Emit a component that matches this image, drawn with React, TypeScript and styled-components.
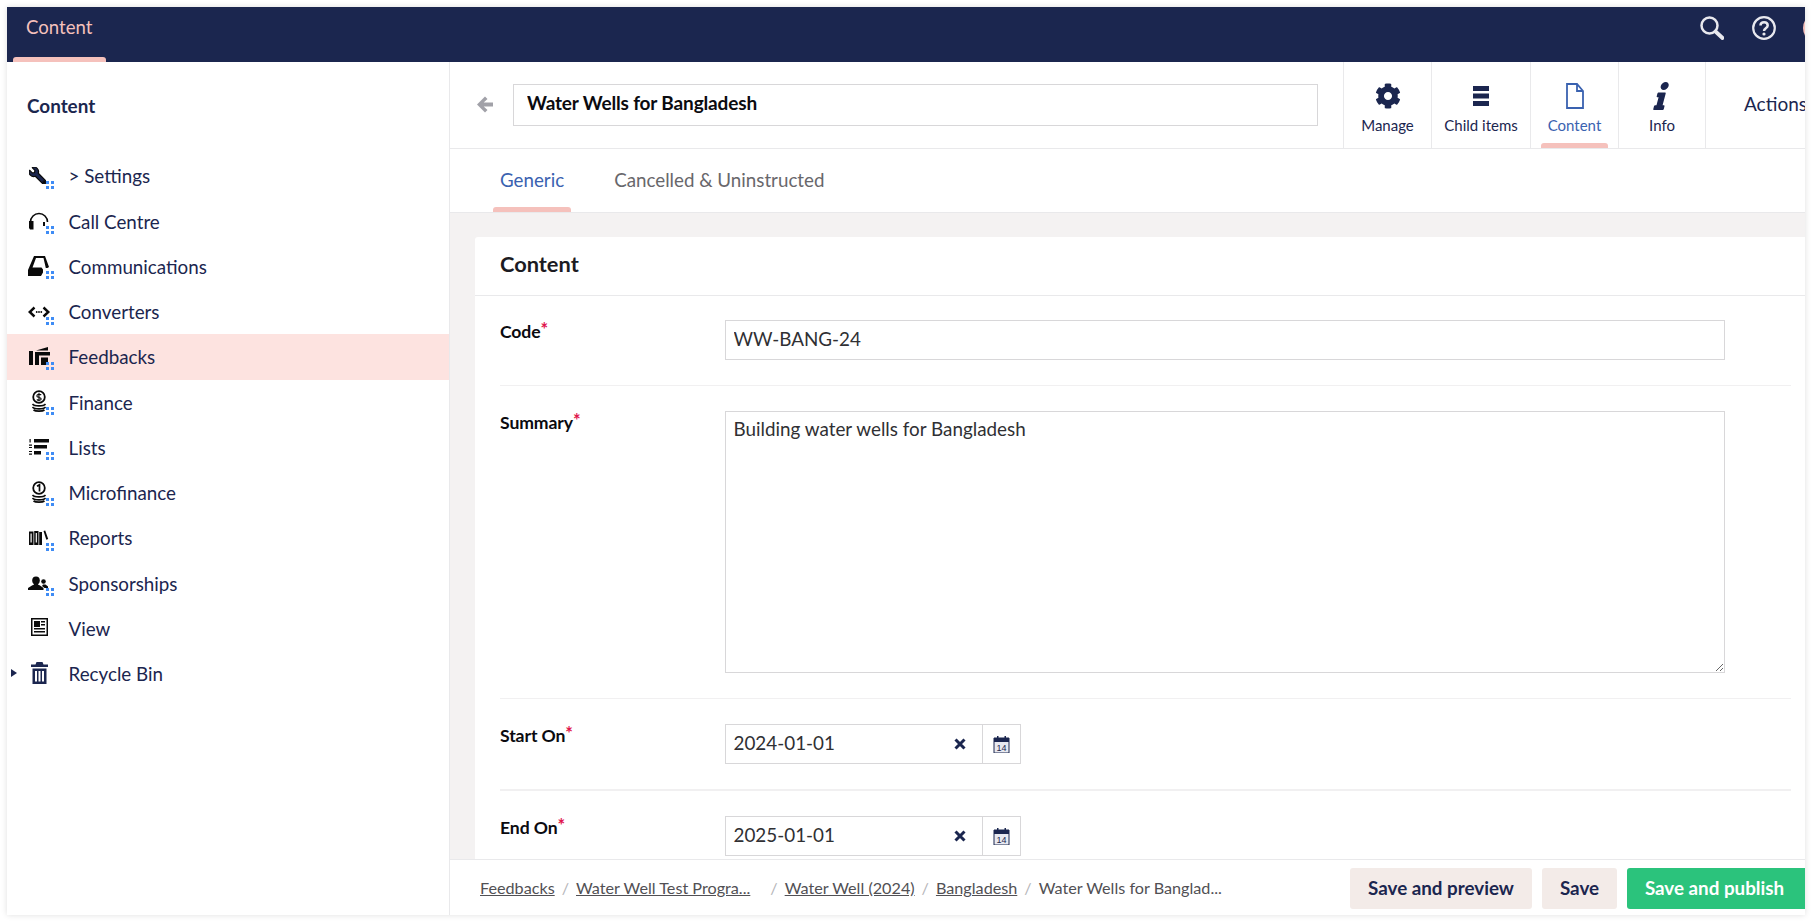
import React from "react";
import styled, { createGlobalStyle } from "styled-components";
import { FaCog, FaInfo, FaWrench } from "react-icons/fa";

const Global = createGlobalStyle`
  html, body { margin: 0; padding: 0; background: #fff; height: 100%; overflow: hidden; }
  body { font-family: Lato, "Noto Sans", sans-serif; color: #1b264f; }
  * { box-sizing: border-box; }
`;

const Frame = styled.div`
  width: 1798px; height: 908px; margin: 7px 0 0 7px;
  display: flex; flex-direction: column; overflow: hidden;
  background: #fff; box-shadow: 0 0 6px rgba(0,0,0,.13);
`;
const TopBar = styled.header`
  height: 55px; flex: none; background: #1b264f; display: flex; align-items: flex-start;
  justify-content: space-between; padding-left: 6px;
`;
const TopTab = styled.div`
  position: relative; width: 93px; height: 55px; padding: 8.5px 0 0 13px;
  color: #f5c1bc; font-size: 18.6px; line-height: 22px;
  &::after { content: ""; position: absolute; left: 0; right: 0; bottom: 0; height: 5px; background: #f5c1bc; border-radius: 3px 3px 0 0; }
`;
const TopTools = styled.div`
  display: flex; align-items: center; height: 42px; gap: 28px; margin-right: -28px; color: #e8e8ee;
`;
const Avatar = styled.div`
  width: 30px; height: 30px; border-radius: 50%; background: #f5c1bc; margin-left: -1px;
`;
const Body = styled.div`flex: 1; display: flex; min-height: 0;`;
const Sidebar = styled.nav`
  width: 443px; flex: none; border-right: 1px solid #e9e9eb; display: flex; flex-direction: column;
`;
const SideTitle = styled.div`
  height: 91.3px; padding: 32px 0 0 20px; font-size: 18.9px; line-height: 24px; font-weight: 700; color: #1b264f;
`;
const SideRow = styled.div<{ $active?: boolean }>`
  position: relative; height: 45.25px; flex: none; display: flex; align-items: center; padding-left: 21px;
  background: ${p => (p.$active ? "#fde3e0" : "transparent")};
  font-size: 18.8px; color: #1b264f;
`;
const Caret = styled.span`
  position: absolute; left: 4px; top: 18px; width: 0; height: 0;
  border-left: 6px solid #1b264f; border-top: 4.5px solid transparent; border-bottom: 4.5px solid transparent;
`;
const IconSlot = styled.span`
  position: relative; width: 40.5px; height: 26px; flex: none; display: block;
  svg { display: block; }
`;
const Dots = styled.span`
  position: absolute; left: 18px; top: 18px; width: 8px; height: 8px;
  background:
    linear-gradient(#3f8cf5,#3f8cf5) 0 0/3px 3px no-repeat,
    linear-gradient(#3f8cf5,#3f8cf5) 100% 0/3px 3px no-repeat,
    linear-gradient(#3f8cf5,#3f8cf5) 0 100%/3px 3px no-repeat,
    linear-gradient(#3f8cf5,#3f8cf5) 100% 100%/3px 3px no-repeat;
`;
const Main = styled.main`flex: 1; min-width: 0; display: flex; flex-direction: column;`;
const TitleBar = styled.div`
  height: 87px; flex: none; display: flex; border-bottom: 1px solid #e9e9eb;
`;
const TitleLeft = styled.div`
  flex: 1; display: flex; align-items: center; padding: 0 25px 0 27px; gap: 20px;
  svg { margin-top: -2px; }
`;
const TitleInput = styled.input`
  flex: 1; height: 42px; border: 1px solid #d8d7d9; padding: 0 13px 5px; font: 700 19px Lato, sans-serif; letter-spacing: -.15px; color: #0b0b10; outline: none; background: #fff;
`;
const ToolCell = styled.div<{ $w: number; $active?: boolean }>`
  position: relative; width: ${p => p.$w}px; flex: none; border-left: 1px solid #e9e9eb;
  display: flex; flex-direction: column; align-items: center; padding-top: 20px;
  font-size: 15px; line-height: 20px; color: ${p => (p.$active ? "#3a62b0" : "#1b264f")};
  svg { display: block; height: 28px; margin-bottom: 5px; }
  ${p => p.$active ? `&::after { content: ""; position: absolute; left: 10px; right: 10px; bottom: 0; height: 5px; background: #f5c1bc; border-radius: 3px 3px 0 0; }` : ""}
`;
const ActionsCell = styled.div`
  width: 100px; flex: none; border-left: 1px solid #e9e9eb; padding: 30px 0 0 38px; font-size: 19px; line-height: 24px; color: #1b264f; white-space: nowrap; overflow: hidden;
`;
const Tabs = styled.div`
  height: 64px; flex: none; display: flex; padding-left: 43px; gap: 36px; border-bottom: 1px solid #e9e9eb;
`;
const TabItem = styled.div<{ $active?: boolean }>`
  position: relative; padding: 18px 7px 0; font-size: 18.75px; line-height: 26px;
  color: ${p => (p.$active ? "#3a62b0" : "#68676b")};
  ${p => p.$active ? `&::after { content: ""; position: absolute; left: 0; right: 0; bottom: 0; height: 5px; background: #f5c1bc; border-radius: 3px 3px 0 0; }` : ""}
`;
const Scroll = styled.div`
  flex: 1; min-height: 0; overflow: hidden; background: #f4f2f2; padding: 24px 0 0 25px;
`;
const Card = styled.section`
  background: #fff; border-radius: 3px 0 0 0; padding-bottom: 30px;
`;
const CardHead = styled.div`
  height: 59px; border-bottom: 1px solid #e9e9eb; padding: 13px 0 0 25px; font-size: 21.8px; line-height: 28px; font-weight: 700; color: #1b1b22;
`;
const FieldRow = styled.div<{ $line?: number }>`
  margin: 0 14px 0 25px; padding-top: ${p => (p.$line ? 25 : 24)}px; display: flex; align-items: flex-start;
  ${p => (p.$line ? `border-top: ${p.$line}px solid #f1f0f1;` : "")}
`;
const Label = styled.div`
  width: 225px; flex: none; font-size: 17.6px; line-height: 22px; font-weight: 700; color: #0b0b10; letter-spacing: -.1px; margin-top: 1px;
  sup { color: #e0144c; font-size: 18px; font-weight: 700; line-height: 0; vertical-align: 2px; }
`;
const TextInput = styled.input`
  width: 1000px; height: 40px; border: 1px solid #d8d7d9; padding: 0 7.5px 3px; font: 400 18.85px Lato, sans-serif; color: #303033; outline: none; margin-bottom: 25px; display: block;
`;
const TextArea = styled.textarea`
  width: 1000px; height: 262px; border: 1px solid #d8d7d9; padding: 5px 7.5px; font: 400 18.85px/24px Lato, sans-serif; color: #303033; outline: none; margin-bottom: 25px; display: block; resize: vertical;
`;
const DateGroup = styled.div`display: flex; margin-bottom: 25px;`;
const DateBox = styled.div`
  width: 258px; height: 40px; border: 1px solid #d8d7d9; display: flex; align-items: center; padding: 0 16px 3px 7.5px;
  font-size: 18.85px; color: #303033; justify-content: space-between; background: #fff;
  svg { margin-top: 3px; }
`;
const CalButton = styled.div`
  width: 39px; height: 40px; margin-left: -1px; border: 1px solid #d8d7d9; display: flex; align-items: center; justify-content: center;
`;
const Footer = styled.footer`
  height: 56px; flex: none; border-top: 1px solid #e9e9eb; display: flex; align-items: center; justify-content: space-between; padding: 0 0 0 30px; background: #fff;
`;
const Crumbs = styled.div`display: flex; align-items: center; font-size: 16.2px; color: #515054; white-space: nowrap;`;
const CrumbLink = styled.a`color: #515054; text-decoration: underline;`;
const CrumbText = styled.span`color: #515054;`;
const Slash = styled.span<{ $wide?: boolean }>`color: #b5b5b9; margin: 0 7px 0 ${p => (p.$wide ? 20 : 7)}px;`;
const Buttons = styled.div`display: flex; gap: 10px; padding-top: 1px;`;
const Btn = styled.button<{ $primary?: boolean; $w: number }>`
  height: 41px; width: ${p => p.$w}px; border: none; padding: 0 0 2px; font: 700 18.8px Lato, sans-serif;
  ${p => p.$primary ? "background:#2bc37c;color:#fff;border-radius:3px 0 0 3px;padding-right:3px;" : "background:#f3ebe8;color:#1b264f;border-radius:3px;"}
`;

const K = "#0a0a0a";
const S = (p: { children: React.ReactNode; color?: string }) => (
  <svg width="24" height="24" viewBox="0 0 24 24" fill={p.color ?? K}>{p.children}</svg>
);
const stack = (
  <path d="M4.500 15c2 2.500 11 2.500 13 0M4.500 18c2 2.500 11 2.500 13 0M5.500 21c2 1.500 9 1.500 11 0" fill="none" stroke={K} strokeWidth="1.600" />
);
const icons: Record<string, React.ReactNode> = {
  wrench: <S><g transform="translate(18,4) scale(-1,1)"><FaWrench size={17} stroke={K} strokeWidth={36} /></g></S>,
  headset: <S><path d="M2.500 14a8.500 8.500 0 0 1 17 0" fill="none" stroke={K} strokeWidth="1.600" /><path d="M1 13h4.500v8.500H2L1 20z" /><rect x="15" y="14" width="2" height="4" /></S>,
  comm: <S><path fillRule="evenodd" d="M6 3h11l4 11-1.500 1h-1.700L15.500 5H8L4.500 14.500h9l1.500 2v3l-2 3.500H0v-6z" /></S>,
  conv: <S><path d="M6.500 8.500 1.700 13l4.800 4.500M15.500 8.500 20.300 13l-4.800 4.500" fill="none" stroke={K} strokeWidth="2.400" /><circle cx="8.700" cy="13" r=".9" /><circle cx="11" cy="13" r=".9" /><circle cx="13.300" cy="13" r=".9" /></S>,
  feed: <S><path d="M1 7h4v14H1zM7 8h15v3.500H11V21H7z" /><path d="M8 6.500 20 3v3.500zM13 13.500h7V21h-7z" /></S>,
  coinS: <S><circle cx="11" cy="8" r="5.800" fill="none" stroke={K} strokeWidth="1.800" /><path d="M13.200 6c-1-1-4.400-1-4.400.9s4.400 1.200 4.400 3-3.400 1.500-4.400.6M11 3.800v8.400" fill="none" stroke={K} strokeWidth="1.100" />{stack}</S>,
  lists: <S><path d="M1.500 5h1.200v3.500H1.500zM1 10.500h3v1.200H1zM1 13h3v1H1zM1 17h3v1H1zM1 19.500h3v1.200H1z" /><path d="M6 5h15v3.500H6zM6 11h13v3.500H6zM6 17h7v3.500H6z" /></S>,
  coin1: <S><circle cx="11" cy="8" r="5.800" fill="none" stroke={K} strokeWidth="1.800" /><path d="M9 6.200 11.500 4.800v6.600" fill="none" stroke={K} strokeWidth="1.700" />{stack}</S>,
  reports: <S><path fillRule="evenodd" d="M1 6.500h4.500V20H1zM2.500 8.500v9h1.200v-9zM6.200 6h4.300v14H6.200zM7.700 8v9.500h1.200V8zM11.200 7h2.800v13h-2.800zM15.500 6l1.700-.6 3 8.500-1.900.8z" /></S>,
  people: <S><ellipse cx="8" cy="10.500" rx="3.800" ry="4" /><path d="M0 20v-2l4-2.500 2-1V13h4v1.500l2 1 3.500 2.500v2z" /><circle cx="15.500" cy="11.500" r="2.300" /><path d="M15 14.500h2.500l2.500 2v1.500h-3.500l-2.500-2z" /></S>,
  view: <S><path fillRule="evenodd" d="M3 3h17v18H3zM4.500 4.500v15h14v-15z" /><path d="M6 6h6v6H6zM13 6h4v1.500h-4zM13 9h4v1.500h-4zM6 13h11v1.500H6zM6 16h11v1.500H6z" /></S>,
  bin: <S color="#1b264f"><path fillRule="evenodd" d="M8.500 1h6l1 2.500H20v2.500H3V3.500h4.500zM4.500 7.500h14V23h-14zM7 10v10.500h2V10zM10.500 10v10.500h2V10zM14 10v10.500h2V10z" /></S>,
};

const items = [
  { t: "> Settings", i: "wrench", d: true },
  { t: "Call Centre", i: "headset", d: true },
  { t: "Communications", i: "comm", d: true },
  { t: "Converters", i: "conv", d: true },
  { t: "Feedbacks", i: "feed", d: true, a: true },
  { t: "Finance", i: "coinS", d: true },
  { t: "Lists", i: "lists", d: true },
  { t: "Microfinance", i: "coin1", d: true },
  { t: "Reports", i: "reports", d: true },
  { t: "Sponsorships", i: "people", d: true },
  { t: "View", i: "view" },
  { t: "Recycle Bin", i: "bin", c: true },
];

const Cal = () => (
  <svg width="17" height="17" viewBox="0 0 17 17">
    <path d="M1 2h15v15H1z" fill="#e8e9f0" stroke="#1b264f" />
    <path d="M1 2h15v4H1zM4 0h1.500v3H4zM11.500 0H13v3h-1.500z" fill="#1b264f" />
    <text x="8.500" y="15" textAnchor="middle" fontSize="9" fontFamily="Liberation Sans, sans-serif" fill="#1b264f">14</text>
  </svg>
);
const Clear = () => (
  <svg width="12" height="12" viewBox="0 0 12 12" fill="none" stroke="#1b264f" strokeWidth="3">
    <path d="M1.500 1.500 10.500 10.500M10.500 1.500 1.500 10.500" />
  </svg>
);

export default function App() {
  return (
    <>
      <Global />
      <Frame>
        <TopBar>
          <TopTab>Content</TopTab>
          <TopTools>
            <svg width="24" height="24" viewBox="0 0 24 24" fill="none" stroke="#e8e8ee">
              <circle cx="9.500" cy="9.500" r="8" strokeWidth="2.500" />
              <path d="M15.500 15.500 22.500 22" strokeWidth="3.800" strokeLinecap="round" />
            </svg>
            <svg width="24" height="24" viewBox="0 0 24 24" fill="none" stroke="#e8e8ee">
              <circle cx="12" cy="12" r="10.800" strokeWidth="2.200" />
              <path d="M8.500 9.500c0-4.500 7.200-4.500 7.200 0 0 2.800-3.700 2.800-3.700 5.500" strokeWidth="2.500" />
              <circle cx="12" cy="18" r="1.600" fill="#e8e8ee" stroke="none" />
            </svg>
            <Avatar />
          </TopTools>
        </TopBar>
        <Body>
          <Sidebar>
            <SideTitle>Content</SideTitle>
            {items.map(it => (
              <SideRow key={it.t} $active={it.a}>
                {it.c && <Caret />}
                <IconSlot>
                  {icons[it.i]}
                  {it.d && <Dots />}
                </IconSlot>
                {it.t}
              </SideRow>
            ))}
          </Sidebar>
          <Main>
            <TitleBar>
              <TitleLeft>
                <svg width="16" height="17" viewBox="0 0 16 17" fill="#a1a1a8"><path d="M8 .5 0 8.500l8 8 2.500-2.500-3.800-3.500H16v-4H6.700L10.500 3z" /></svg>
                <TitleInput readOnly value="Water Wells for Bangladesh" />
              </TitleLeft>
              <ToolCell $w={88}>
                <FaCog size={26} />
                Manage
              </ToolCell>
              <ToolCell $w={99}>
                <svg width="18" height="22" viewBox="0 0 18 28" fill="#1b264f"><path d="M1 4h16v5H1zM1 11.500h16v5H1zM1 19h16v5H1z" /></svg>
                Child items
              </ToolCell>
              <ToolCell $w={88} $active>
                <svg width="20" height="26" viewBox="0 0 20 28" fill="none" stroke="#3a62b0" strokeWidth="1.800"><path d="M2 2h10l6 7v17H2zM12 2v7h6" /></svg>
                Content
              </ToolCell>
              <ToolCell $w={87}>
                <FaInfo size={26} style={{ transform: "skewX(-15deg)" }} />
                Info
              </ToolCell>
              <ActionsCell>Actions</ActionsCell>
            </TitleBar>
            <Tabs>
              <TabItem $active>Generic</TabItem>
              <TabItem>Cancelled &amp; Uninstructed</TabItem>
            </Tabs>
            <Scroll>
              <Card>
                <CardHead>Content</CardHead>
                <FieldRow>
                  <Label>Code<sup>*</sup></Label>
                  <TextInput readOnly value="WW-BANG-24" />
                </FieldRow>
                <FieldRow $line={1}>
                  <Label>Summary<sup>*</sup></Label>
                  <TextArea readOnly value="Building water wells for Bangladesh" />
                </FieldRow>
                <FieldRow $line={1}>
                  <Label>Start On<sup>*</sup></Label>
                  <DateGroup><DateBox>2024-01-01<Clear /></DateBox><CalButton><Cal /></CalButton></DateGroup>
                </FieldRow>
                <FieldRow $line={2}>
                  <Label>End On<sup>*</sup></Label>
                  <DateGroup><DateBox>2025-01-01<Clear /></DateBox><CalButton><Cal /></CalButton></DateGroup>
                </FieldRow>
              </Card>
            </Scroll>
            <Footer>
              <Crumbs>
                <CrumbLink>Feedbacks</CrumbLink><Slash>/</Slash>
                <CrumbLink>Water Well Test Progra...</CrumbLink><Slash $wide>/</Slash>
                <CrumbLink>Water Well (2024)</CrumbLink><Slash>/</Slash>
                <CrumbLink>Bangladesh</CrumbLink><Slash>/</Slash>
                <CrumbText>Water Wells for Banglad...</CrumbText>
              </Crumbs>
              <Buttons>
                <Btn $w={182}>Save and preview</Btn>
                <Btn $w={75}>Save</Btn>
                <Btn $w={178} $primary>Save and publish</Btn>
              </Buttons>
            </Footer>
          </Main>
        </Body>
      </Frame>
    </>
  );
}
